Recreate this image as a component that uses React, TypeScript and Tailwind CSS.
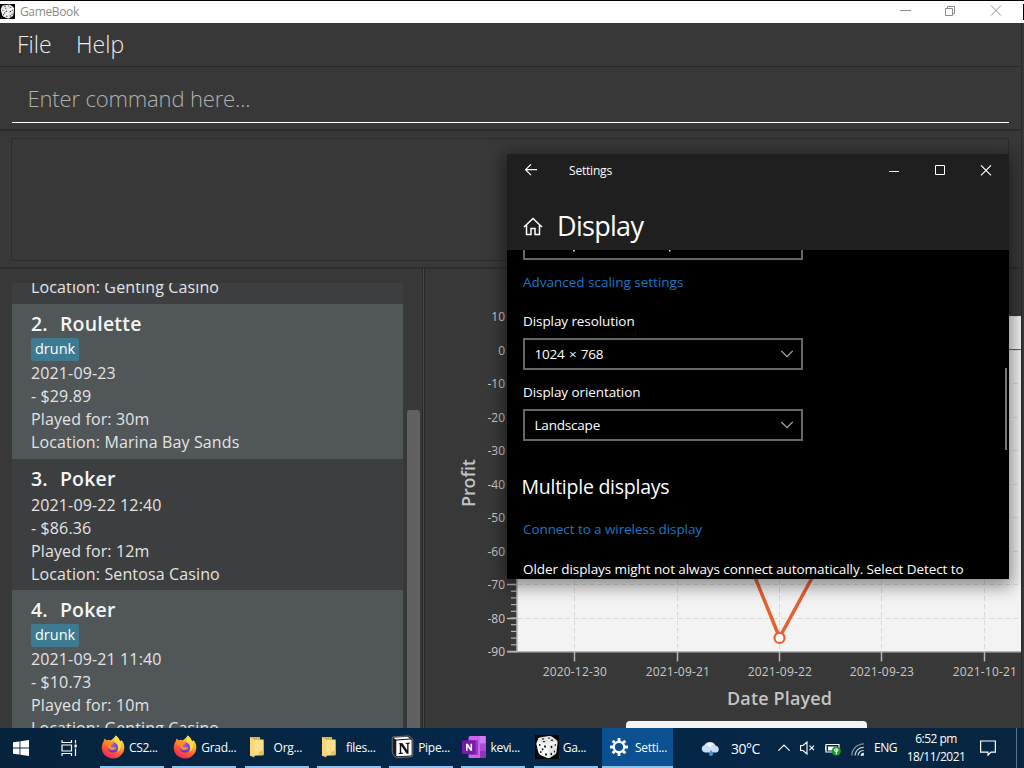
import React from "react";

const SEGOE = "font-['Open_Sans','Noto_Sans',sans-serif]";

/* ---------- icons ---------- */

function Dice({ className }: { className: string }) {
  return (
    <svg className={className} viewBox="0 0 24 24">
      <rect width="24" height="24" fill="#050505" />
      <path d="M3 4.5Q2.500 3 4.500 2.500L14 1Q16 .8 17.500 2L21.500 5Q22.800 6 22.600 8L21.500 17Q21.300 18.500 20 19.500L15.500 22.500Q14 23.400 12 22.800L5.500 20Q4 19.300 3.500 17.500L1.500 9Q1.300 7.500 2 6.500Z" fill="#e4e4e4" />
      <path d="M3 6.500Q9 9.500 13 8.500L21.500 6 22 8Q16 10 14 11 13 14 14 22.500L12 22.800 5.500 20 3.500 17.500 1.500 9Z" fill="#fff" opacity=".7" />
      <g fill="#111">
        <ellipse cx="8" cy="3.900" rx="1.200" ry=".7" />
        <ellipse cx="14" cy="3" rx="1.200" ry=".6" />
        <ellipse cx="9" cy="6.600" rx="1.300" ry=".7" />
        <ellipse cx="17" cy="5.300" rx="1.300" ry=".7" />
        <ellipse cx="4.700" cy="10" rx=".8" ry="1.100" />
        <ellipse cx="10" cy="11.500" rx=".9" ry="1.200" />
        <ellipse cx="7.600" cy="14.300" rx=".9" ry="1.100" />
        <ellipse cx="5.800" cy="17" rx=".8" ry="1.100" />
        <ellipse cx="11" cy="19.500" rx=".9" ry="1.200" />
        <ellipse cx="16.500" cy="12" rx=".8" ry="1.200" />
        <ellipse cx="20.300" cy="10" rx=".6" ry="1.100" />
        <ellipse cx="16.300" cy="19" rx=".8" ry="1.200" />
        <ellipse cx="19.400" cy="16.600" rx=".6" ry="1.100" />
      </g>
    </svg>
  );
}

function Firefox() {
  return (
    <svg className="h-6 w-6 shrink-0" viewBox="0 0 24 24">
      <defs>
        <linearGradient id="ffBody" x1=".8" y1="0" x2=".25" y2="1">
          <stop offset="0" stopColor="#fff04a" />
          <stop offset=".35" stopColor="#ffb12a" />
          <stop offset=".65" stopColor="#ff5a36" />
          <stop offset="1" stopColor="#f0215f" />
        </linearGradient>
        <radialGradient id="ffCore" cx=".5" cy=".35" r=".6">
          <stop offset="0" stopColor="#9059ff" />
          <stop offset="1" stopColor="#5b3fc4" />
        </radialGradient>
      </defs>
      <path d="M14.500.5C17 2 18 4 18.500 5.500 20 6.300 20.500 6 20.500 5 22.700 7.500 23.500 10.500 23.300 13.300 22.800 19 18.200 23.500 12.200 23.500 5.500 23.500.8 18.600.8 12.800.8 10 1.700 7.500 3 5.800L3.400 3.400C4.400 4 5 4.700 5.500 5.400 6.700 5 8 5 9.200 5.400 11 4.500 13.600 3.200 14.500.5Z" fill="url(#ffBody)" />
      <path d="M14.500.5C17.200 2 18.300 4.600 19.200 6.500 21 10 20 15 16.800 16.800 18 13.500 17.500 9.500 14.500 7.500 12.500 6 13.500 3 14.500.5Z" fill="#ffdc3e" />
      <circle cx="12" cy="12.600" r="5" fill="url(#ffCore)" />
      <path d="M3.500 6.200C6 5 8.500 6 9.700 7.400L12.800 8C13.300 9.300 11.500 9.700 10.300 10.200 9.700 10.800 10.300 12 11.500 12.200 13.500 12.500 14.300 11.500 15 12.200 15 14.300 12.600 15.500 10.500 15 7.200 14.200 6.300 11.500 7 9.200 5.500 8.300 4.600 7.600 3.500 6.200Z" fill="#ff8a26" />
    </svg>
  );
}

function Folder() {
  return (
    <svg className="h-6 w-6 shrink-0" viewBox="0 0 24 24">
      <path d="M4 2H14V4.500L17.500 5V20L8 21H4Z" fill="#e3b04b" />
      <path d="M8 5.200L17.500 4.500V19.500L8 20Z" fill="#fbe08f" />
      <path d="M4 2L8.300 4.800V22.500L4 20.500Z" fill="#fbd775" />
      <path d="M13 17L17.500 15V20.300L13 20.500Z" fill="#edc05f" />
    </svg>
  );
}

function Notion() {
  return (
    <svg className="h-6 w-6 shrink-0" viewBox="0 0 24 24">
      <path d="M2.200 3.200Q2.200 2 3.400 1.900L17.500.9Q18.600.8 19.500 1.500L22 3.300Q22.800 4 22.800 5V20Q22.800 21.600 21.200 21.700L7.200 22.800Q6.200 22.900 5.600 22.100L3 19Q2.300 18.200 2.300 17Z" fill="#1d1d1d" stroke="#8f8f8f" strokeWidth=".7" />
      <path d="M3.400 2.800L17.600 1.800 20 3.600 6 4.600Z" fill="#fff" />
      <path d="M6.300 6Q6.300 5.500 7 5.400L20.800 4.500Q21.600 4.500 21.600 5.300V19.700Q21.600 20.400 20.800 20.500L7.200 21.300Q6.300 21.300 6.300 20.500Z" fill="#fff" />
      <path d="M9.300 8.200L12.300 8 17.200 15.300V9L15.800 8.700V7.900L19.700 7.600V8.500L18.500 8.900V18.700L16.700 18.800 11.200 10.700V17.600L12.800 18V18.900L8.600 19.100V18.300L9.800 17.800V9.200L8.800 8.900Z" fill="#111" />
    </svg>
  );
}

function OneNote() {
  return (
    <svg className="h-6 w-6 shrink-0" viewBox="0 0 24 24">
      <rect x="6.500" y="1" width="17.200" height="22" rx="1.500" fill="#ca64ea" />
      <rect x="18" y="1" width="5.700" height="7.500" fill="#cf7bf0" />
      <rect x="18" y="8.500" width="5.700" height="7.300" fill="#ae4bd5" />
      <path d="M18 15.800H23.700V21.500Q23.700 23 22.200 23H18Z" fill="#9332bf" />
      <rect x="6.500" y="5" width="9.500" height="15" fill="#8b2fb3" opacity=".8" />
      <rect x="0" y="5.500" width="13.500" height="13.500" rx="1.300" fill="#7719aa" />
      <path d="M4 15.800V8.700H5.900L8.500 13V8.700H10.100V15.800H8.300L5.600 11.400V15.800Z" fill="#fff" />
    </svg>
  );
}

function Gear() {
  return (
    <svg className="h-[18px] w-[18px] shrink-0" viewBox="0 0 18 18" fill="none" stroke="#fff">
      <circle cx="9" cy="9" r="5.200" strokeWidth="2.200" />
      <g strokeWidth="2.800">
        <path d="M9 0V3M9 15V18M0 9H3M15 9H18M2.640 2.640L4.700 4.700M13.300 13.300L15.360 15.360M15.360 2.640L13.300 4.700M4.700 13.300L2.640 15.360" />
      </g>
    </svg>
  );
}

/* ---------- game list ---------- */

type Game = { n: number; name: string; tag?: string; date: string; amount: string; time: string; place: string };

const games: Game[] = [
  { n: 2, name: "Roulette", tag: "drunk", date: "2021-09-23", amount: "- $29.89", time: "30m", place: "Marina Bay Sands" },
  { n: 3, name: "Poker", date: "2021-09-22 12:40", amount: "- $86.36", time: "12m", place: "Sentosa Casino" },
  { n: 4, name: "Poker", tag: "drunk", date: "2021-09-21 11:40", amount: "- $10.73", time: "10m", place: "Genting Casino" },
];

function GameRow({ g }: { g: Game }) {
  return (
    <div className={`shrink-0 pt-[5px] pr-2 pl-[19px] ${g.n % 2 === 0 ? "bg-[#515658] pb-[5px]" : "bg-[#3c3e3f] pb-1"}`}>
      <div className="flex h-[29px] items-center gap-3 text-[19.500px] leading-[29px] font-semibold tracking-[0.200px] text-[#f4f4f4]">
        <span>{g.n}.</span>
        <span>{g.name}</span>
      </div>
      {g.tag ? (
        <div className="flex h-6 items-start">
          <span className="h-[23px] rounded-[2px] bg-[#3e7b91] px-1 text-[14.500px] leading-[21px] text-white">{g.tag}</span>
        </div>
      ) : (
        <div className="h-px" />
      )}
      <div className="text-base leading-[23px] tracking-[0.130px] text-[#e4e4e4]">
        <p>{g.date}</p>
        <p>{g.amount}</p>
        <p>Played for: {g.time}</p>
        <p>Location: {g.place}</p>
      </div>
    </div>
  );
}

/* ---------- chart ---------- */

const xTicks = [
  { x: 574.5, label: "2020-12-30" },
  { x: 677.5, label: "2021-09-21" },
  { x: 779.5, label: "2021-09-22" },
  { x: 881.5, label: "2021-09-23" },
  { x: 984.5, label: "2021-10-21" },
];
const yTicks = [10, 0, -10, -20, -30, -40, -50, -60, -70, -80, -90];
const yPos = (v: number) => Math.floor(350 - v * 3.35) + 0.5;

function Chart() {
  return (
    <svg className={`block h-[459px] w-[596px] ${SEGOE}`} viewBox="425 269 596 459">
      <rect x="517" y="316" width="504" height="336" fill="#f3f3f3" />
      <g stroke="#dadada" strokeDasharray="5 3">
        {xTicks.map((t) => <path key={t.x} d={`M${t.x} 316V651`} />)}
        {yTicks.map((v) => <path key={v} d={`M517 ${yPos(v)}H1021`} />)}
      </g>
      <path d="M517 349.500H1021" stroke="#666" />
      <g stroke="#b4b4b4" strokeWidth="1.500">
        <path d="M517 316V652M507 651.750H1021" />
        {yTicks.map((v) => <path key={v} d={`M507 ${yPos(v)}H517`} />)}
        {xTicks.map((t) => <path key={t.x} d={`M${t.x} 651V661.500`} />)}
        {Array.from({ length: 50 }, (_, i) => <path key={i} d={`M511 ${(316.5 + i * 6.7).toFixed(1)}H517`} strokeWidth="1.200" />)}
      </g>
      <path d="M574.500 340L677.500 386.500 779.500 637.500 881.500 450.500 984.500 340" fill="none" stroke="#e8602f" strokeWidth="3.500" strokeLinejoin="round" />
      <circle cx="779.500" cy="637.900" r="5" fill="#fff" stroke="#e8602f" strokeWidth="2.200" />
      <g fill="#c9c9c9" fontSize="12">
        {yTicks.map((v) => <text key={v} x="505" y={yPos(v) + 4.5} textAnchor="end">{v}</text>)}
        {xTicks.map((t) => <text key={t.x} x={t.x + 0.3} y="676" textAnchor="middle" textLength="64">{t.label}</text>)}
      </g>
      <g fill="#c4c4c4" fontSize="18" fontWeight="600">
        <text x="779.500" y="705" textAnchor="middle" textLength="105">Date Played</text>
        <text transform="translate(474.500 483) rotate(-90)" textAnchor="middle" textLength="48">Profit</text>
      </g>
      <rect x="626" y="721" width="241" height="20" rx="4" fill="#f3f3f3" />
    </svg>
  );
}

/* ---------- settings window ---------- */

function Select({ value }: { value: string }) {
  return (
    <div className="flex h-8 w-[280px] items-center justify-between border-2 border-[#666] pr-2 pl-[9.500px] text-[13.500px] tracking-[-0.200px] text-white">
      <span className="[word-spacing:1px]">{value}</span>
      <svg className="h-3 w-3" viewBox="0 0 12 12" fill="none" stroke="#ababab" strokeWidth="1.200">
        <path d="M.3 3L6 8.700 11.700 3" />
      </svg>
    </div>
  );
}

function SettingsWindow() {
  return (
    <div className={`absolute top-[154px] left-[507px] flex h-[425px] w-[502px] flex-col bg-black text-white shadow-[0_4px_16px_3px_rgba(0,0,0,0.45)] ${SEGOE}`}>
      <div className="h-24 shrink-0 bg-[#1f1f1f]">
        <div className="flex h-8 items-center">
          <svg className="ml-[18px] h-3 w-3" viewBox="0 0 12 12" fill="none" stroke="#fff" strokeWidth="1.200">
            <path d="M6 .3L.6 5.700 6 11.100M.6 5.700H12" />
          </svg>
          <span className="ml-[32px] pt-[2px] text-[12px] tracking-[-0.200px]">Settings</span>
          <svg className="ml-auto mr-[17px] h-[11px] w-[103px]" viewBox="0 0 103 11" fill="none" stroke="#fff">
            <path d="M0 6.500H10" />
            <path d="M46.500 .5H55.500V9.500H46.500Z" />
            <path d="M92 .3L102 10.300M102 .3L92 10.300" strokeWidth="1.100" />
          </svg>
        </div>
        <div className="mt-[17px] flex h-[46px] items-center">
          <svg className="ml-4 h-[19px] w-5" viewBox="0 0 20 19" fill="none" stroke="#fff" strokeWidth="1.500">
            <path d="M1 10L10 1.500 19 10M3.500 8V17.500H8V11.500H12V17.500H16.500V8" />
          </svg>
          <span className="ml-[14px] text-[27px] tracking-[-0.700px]">Display</span>
        </div>
      </div>
      <div className="relative flex flex-1 flex-col items-start overflow-hidden pl-4 text-[13.500px] leading-5 tracking-[-0.080px]">
        <div className="flex h-[10px] w-[280px] shrink-0 items-end overflow-hidden border-x-2 border-b-2 border-[#666]">
          <svg className="h-2 w-[276px]" viewBox="0 0 276 8">
            <path d="M48 0H50L49.500 1.500H48ZM144 0H145.500V1.500H144Z" fill="#ddd" />
          </svg>
        </div>
        <a className="mt-3 tracking-[-0.010px] text-[#1877c9]">Advanced scaling settings</a>
        <p className="mt-[19px] mb-[7px]">Display resolution</p>
        <Select value="1024 × 768" />
        <p className="mt-3 mb-[7px]">Display orientation</p>
        <Select value="Landscape" />
        <h2 className="mt-[32px] -ml-[1.500px] text-[19.500px] leading-7 tracking-[-0.250px]">Multiple displays</h2>
        <a className="mt-[18px] text-[#1877c9]">Connect to a wireless display</a>
        <p className="mt-5 whitespace-nowrap">Older displays might not always connect automatically. Select Detect to</p>
        <div className="absolute top-[118px] right-[2px] h-[82px] w-[2px] bg-[#777]" />
      </div>
    </div>
  );
}

/* ---------- taskbar ---------- */

const tasks: { icon: React.ReactNode; label: string }[] = [
  { icon: <Firefox />, label: "CS2..." },
  { icon: <Firefox />, label: "Grad..." },
  { icon: <Folder />, label: "Org..." },
  { icon: <Folder />, label: "files..." },
  { icon: <Notion />, label: "Pipe..." },
  { icon: <OneNote />, label: "kevi..." },
  { icon: <Dice className="h-6 w-6 shrink-0" />, label: "Ga..." },
];

function Taskbar() {
  return (
    <div className={`flex h-10 shrink-0 bg-linear-to-r from-[#06233c] via-[#04284b] to-[#072540] text-[12px] tracking-[-0.300px] text-white ${SEGOE}`}>
      <div className="flex w-[100px] shrink-0 items-center">
        <svg className="ml-[13px] h-4 w-4" viewBox="0 0 16 16" fill="#fff">
          <path d="M0 2.300L6.500 1.400V7.600H0ZM7.400 1.300L16 0V7.600H7.400ZM0 8.400H6.500V14.600L0 13.700ZM7.400 8.400H16V16L7.400 14.700Z" />
        </svg>
        <svg className="ml-8 h-4 w-4" viewBox="0 0 16 16" fill="none" stroke="#fff" strokeWidth="1.200">
          <path d="M1 0V2.500H10.500V0M1 16V13.500H10.500V16M1 5H10.500V11H1ZM14.500 0V3.500M14.500 8.500V16" />
          <rect x="13.500" y="4.500" width="2.200" height="3" fill="#fff" stroke="none" />
        </svg>
      </div>
      {tasks.map((t, i) => (
        <div key={i} className="flex w-[72.300px] shrink-0">
          <div className="flex w-16 items-center gap-1 border-b-2 border-[#8cc4ee] pl-[1px] whitespace-nowrap">
            {t.icon}
            <span className="pt-[2px]">{t.label}</span>
          </div>
        </div>
      ))}
      <div className="-ml-[4px] flex w-[71px] shrink-0 items-center gap-[7px] border-b-2 border-[#8cc4ee] bg-[#0b5091] pl-2 whitespace-nowrap">
        <Gear />
        <span className="pt-[2px]">Setti...</span>
      </div>
      <div className="flex flex-1 items-center">
        <svg className="ml-[27px] h-4 w-[21px]" viewBox="0 0 21 16">
          <path d="M5 12.500A4.500 4 0 0 1 4.500 5 6 5.500 0 0 1 15.500 5.500 4 3.700 0 0 1 16.500 12.500Z" fill="#c9ddf5" />
          <path d="M6 5A5 4.500 0 0 1 14 4.500 5 5 0 0 0 10 8 5 4 0 0 0 6 5Z" fill="#fff" opacity=".8" />
          <path d="M11 10Q13.500 13 13 14A2 2 0 0 1 9 14Q8.700 13 11 10Z" fill="#3a94e0" />
        </svg>
        <span className="ml-2.5 w-[38px] text-[14px] tracking-[-0.500px]">30°C</span>
        <svg className="ml-[9px] h-3 w-3 shrink-0" viewBox="0 0 12 12" fill="none" stroke="#fff" strokeWidth="1.200">
          <path d="M.3 8.700L6 3 11.700 8.700" />
        </svg>
        <svg className="ml-[10px] h-[14px] w-[15px] shrink-0" viewBox="0 0 15 14" fill="none" stroke="#fff" strokeWidth="1.100">
          <path d="M.6 4.500H3L7 1V13L3 9.500H.6ZM9.500 4.700L14 9.200M14 4.700L9.500 9.200" />
        </svg>
        <svg className="mt-[2px] ml-[10px] h-[14px] w-4 shrink-0" viewBox="0 0 16 14">
          <path d="M1 2.500H14V10H1Z" fill="none" stroke="#fff" strokeWidth="1.200" />
          <path d="M0 4.500H1V8H0ZM3 4.500H12V8.500H3Z" fill="#fff" />
          <circle cx="11.300" cy="9" r="4.600" fill="#159c2c" />
          <path d="M11.300 7V12.500M9.500 7.500Q9.500 9.800 11.300 9.800 13.100 9.800 13.100 7.500 11.300 5.500 9.500 7.500" fill="none" stroke="#fff" />
        </svg>
        <svg className="mt-[2px] ml-[10px] h-[13px] w-[13px] shrink-0" viewBox="0 0 13 13" fill="none" strokeWidth="1.200">
          <path d="M.8 12.500A12 12 0 0 1 12.800 .8" stroke="#8294a6" />
          <path d="M4 12.500A8.500 8.500 0 0 1 12.800 4.300M7 12.500A5.500 5.500 0 0 1 12.800 7.500" stroke="#c8d0d8" />
          <path d="M9.500 12.800A3.300 3.300 0 0 1 12.800 9.800V12.800Z" fill="#fff" />
        </svg>
        <span className="ml-[10px] w-[26px] tracking-[-0.500px]">ENG</span>
        <div className="ml-[4px] w-[64px] text-center text-[12px] leading-[18px] tracking-[-0.500px] whitespace-nowrap">
          <p>6:52 pm</p>
          <p>18/11/2021</p>
        </div>
        <svg className="ml-[12px] h-4 w-4 shrink-0" viewBox="0 0 16 16" fill="none" stroke="#fff" strokeWidth="1.200">
          <path d="M.6 1H15.400V12.200H11L8 15.200V12.200H.6Z" />
        </svg>
      </div>
      <div className="mr-[7px] w-px shrink-0 bg-[#5b7186]" />
    </div>
  );
}

/* ---------- page ---------- */

export default function App() {
  return (
    <div className="relative flex h-[768px] w-[1024px] flex-col overflow-hidden bg-[#383838] font-['Open_Sans','Noto_Sans',sans-serif]">
      <header className="flex h-[23px] shrink-0 items-center border-t border-black bg-white">
        <Dice className="-mt-px h-[15px] w-[15px]" />
        <span className="ml-[5px] text-[12px] tracking-[-0.350px] text-[#8c8c8c]">GameBook</span>
        <svg className="-mt-[3px] mr-[21px] ml-auto h-[11px] w-[102px]" viewBox="0 0 102 11" fill="none" stroke="#8c8c8c">
          <path d="M0 5.500H11" />
          <path d="M45.500 3.500H52.500V10.500H45.500ZM47.500 3.500V1.500H54.500V8.500H52.500" />
          <path d="M91 .5L101 10.500M101 .5L91 10.500" />
        </svg>
        <div className="-mr-px h-4 w-[2px] self-center bg-black" />
      </header>

      <div className="flex min-h-0 flex-1">
        <div className="flex w-[1021px] shrink-0 flex-col">
          <nav className="flex h-11 shrink-0 items-center border-b border-[#292929] pl-[17px] text-[23px] font-light text-[#ececec]">
            <span className="w-[59px]">File</span>
            <span>Help</span>
          </nav>
          <div className="h-[64px] shrink-0 border-b-2 border-[#2c2c2c] px-3 pt-[9px]">
            <div className="flex h-[47px] items-center border-b border-white pb-[2px] pl-[15.500px] text-[22px] font-light tracking-[-0.150px] text-[#b0b0b0]">
              Enter command here...
            </div>
          </div>
          <div className="h-[137px] shrink-0 border-b border-[#2c2c2c] pt-[7px] pr-3 pl-[11px]">
            <div className="h-[123px] border border-[#2c2c2c]" />
          </div>
          <div className="flex min-h-0 flex-1 border-t border-[#303030]">
            <div className="flex w-[423px] shrink-0 border-r border-[#262626] pt-[14px] pl-3">
              <div className="flex w-[391px] shrink-0 flex-col overflow-hidden">
                <div className="flex h-[21px] shrink-0 flex-col justify-end overflow-hidden bg-[#3c3e3f] pb-[5px] pl-[19px] text-base leading-[23px] tracking-[0.130px] text-[#e4e4e4]">
                  <p>Location: Genting Casino</p>
                </div>
                {games.map((g) => <GameRow key={g.n} g={g} />)}
              </div>
              <div className="ml-1 flex w-[13px] flex-col pt-[127px]">
                <div className="flex-1 rounded-t-[3px] bg-[#616161]" />
              </div>
            </div>
            <div className="w-[2px] shrink-0 border-r border-[#2a2a2a] bg-[#4a4a4a]" />
            <div className="min-w-0 flex-1 overflow-hidden">
              <Chart />
            </div>
          </div>
        </div>
        <div className="flex-1 border-l border-[#2a2a2a]" />
      </div>

      <Taskbar />
      <SettingsWindow />
    </div>
  );
}
